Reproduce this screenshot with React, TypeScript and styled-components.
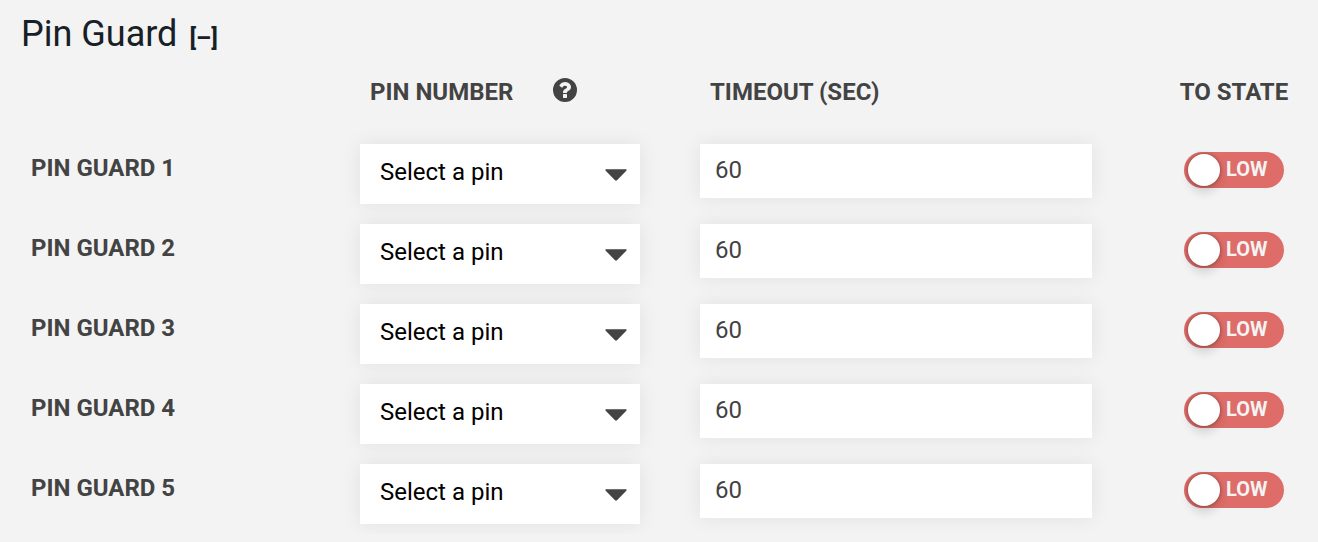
import React, { useState } from "react";
import styled, { createGlobalStyle } from "styled-components";

const GlobalStyle = createGlobalStyle`
  *, *::before, *::after { box-sizing: border-box; }
  body {
    margin: 0;
    background: #f3f3f3;
    color: #434343;
    font-family: Roboto, "Liberation Sans", sans-serif;
    font-size: 24px;
    line-height: 28px;
  }
  button, input, select { font: inherit; }
`;

const Panel = styled.section`
  padding-top: 12px;
`;

const Header = styled.header`
  display: flex;
  align-items: baseline;
  gap: 12px;
  padding-left: 21px;
  color: #162026;
`;

const Title = styled.h2`
  margin: 0;
  font-size: 36px;
  font-weight: 400;
  line-height: 44px;
`;

const CollapseButton = styled.button`
  padding: 0;
  border: 0;
  background: none;
  color: inherit;
  font-weight: 700;
  cursor: pointer;
`;

const GuardTable = styled.table`
  width: 100%;
  table-layout: fixed;
  border-collapse: collapse;
`;

const Column = styled.col<{ $width?: number }>`
  width: ${({ $width }) => ($width ? `${$width}px` : "auto")};
`;

const ColumnHeading = styled.th<{ $align?: "left" | "center" }>`
  height: 78px;
  padding: 22px 0 0 ${({ $align }) => ($align === "center" ? "18px" : "30px")};
  font-weight: 700;
  text-align: ${({ $align = "left" }) => $align};
  text-transform: uppercase;
  vertical-align: top;
`;

const HeadingGroup = styled.div`
  display: flex;
  align-items: flex-start;
  gap: 40px;
`;

const HelpButton = styled.button`
  display: flex;
  padding: 0;
  border: 0;
  background: none;
  color: inherit;
  cursor: pointer;
`;

const RowHeading = styled.th`
  height: 80px;
  padding: 20px 0 0 31px;
  font-weight: 700;
  text-align: left;
  text-transform: uppercase;
  vertical-align: top;
`;

const Cell = styled.td`
  height: 80px;
  padding: 10px 40px 10px 20px;
  vertical-align: top;
`;

const ToggleCell = styled(Cell)`
  padding: 18px 0 0 18px;
  text-align: center;
`;

const SelectBox = styled.div`
  position: relative;
  display: flex;
`;

const Select = styled.select`
  width: 100%;
  height: 60px;
  padding: 0 48px 4px 20px;
  border: 0;
  border-radius: 0;
  appearance: none;
  background: #fff;
  box-shadow: 0 0 20px rgba(0, 0, 0, 0.08);
  color: #000;
`;

const Arrow = styled.svg`
  position: absolute;
  top: 25px;
  right: 13px;
  pointer-events: none;
`;

const TimeoutInput = styled.input`
  display: block;
  width: 100%;
  height: 54px;
  padding: 0 15px 2px;
  border: 0;
  border-radius: 0;
  background: #fff;
  box-shadow: 0 0 20px rgba(0, 0, 0, 0.08);
  color: #434343;
`;

const Toggle = styled.button<{ $on: boolean }>`
  display: inline-flex;
  flex-direction: ${({ $on }) => ($on ? "row-reverse" : "row")};
  align-items: center;
  gap: 6px;
  width: 100px;
  height: 36px;
  padding: 0 4px;
  border: 0;
  border-radius: 18px;
  background: ${({ $on }) => ($on ? "#66aa44" : "#de6c68")};
  color: #f3f3f3;
  font-size: 20px;
  font-weight: 700;
  line-height: 36px;
  vertical-align: top;
  cursor: pointer;
`;

const Knob = styled.span`
  width: 32px;
  height: 32px;
  border-radius: 50%;
  background: #fff;
  box-shadow: 0 0 4px rgba(0, 0, 0, 0.4), 0 8px 8px rgba(0, 0, 0, 0.1);
`;

const ToggleText = styled.span`
  padding-bottom: 2px;
`;

function HelpIcon() {
  return (
    <svg width="24" height="24" viewBox="0 0 1536 1536" fill="currentColor" aria-hidden="true">
      <path
        fillRule="evenodd"
        d="M896 1248v-192q0-14-9-23t-23-9h-192q-14 0-23 9t-9 23v192q0 14 9 23t23 9h192q14 0 23-9t9-23zM1152 576q0-88-55.5-163t-138.5-116-170-41q-243 0-371 213-15 24 8 42l132 100q7 6 19 6 16 0 25-12 53-68 86-92 34-24 86-24 48 0 85.5 26t37.5 59q0 38-20 61t-68 45q-63 28-115.5 86.5t-52.5 125.5v36q0 14 9 23t23 9h192q14 0 23-9t9-23q0-19 21.5-49.5t54.5-49.5q32-18 49-28.5t46-35 44.5-48 28-60.5 12.5-81zM1536 768a768 768 0 1 1-1536 0a768 768 0 1 1 1536 0z"
      />
    </svg>
  );
}

function GuardRow({ index }: { index: number }) {
  const [high, setHigh] = useState(false);
  const name = `Pin Guard ${index}`;
  return (
    <tr>
      <RowHeading scope="row">{name}</RowHeading>
      <Cell>
        <SelectBox>
          <Select aria-label={`${name} pin number`} defaultValue="">
            <option value="">Select a pin</option>
          </Select>
          <Arrow width="22" height="12" viewBox="0 0 22 12" aria-hidden="true">
            <path
              d="M1 0.3H21Q22.2 0.7 21.3 1.7L12 11.2Q11 12.1 10 11.2L0.7 1.7Q-0.2 0.7 1 0.3Z"
              fill="#434343"
            />
          </Arrow>
        </SelectBox>
      </Cell>
      <Cell>
        <TimeoutInput aria-label={`${name} timeout in seconds`} inputMode="numeric" defaultValue="60" />
      </Cell>
      <ToggleCell>
        <Toggle
          type="button"
          role="switch"
          aria-checked={high}
          aria-label={`${name} to state`}
          $on={high}
          onClick={() => setHigh(!high)}
        >
          <Knob />
          <ToggleText>{high ? "HIGH" : "LOW"}</ToggleText>
        </Toggle>
      </ToggleCell>
    </tr>
  );
}

export default function App() {
  const [open, setOpen] = useState(true);
  return (
    <>
      <GlobalStyle />
      <Panel>
        <Header>
          <Title>Pin Guard</Title>
          <CollapseButton type="button" aria-expanded={open} onClick={() => setOpen(!open)}>
            {open ? "[–]" : "[+]"}
          </CollapseButton>
        </Header>
        {open && (
          <GuardTable>
            <colgroup>
              <Column $width={340} />
              <Column $width={340} />
              <Column />
              <Column $width={186} />
            </colgroup>
            <thead>
              <tr>
                <td />
                <ColumnHeading scope="col">
                  <HeadingGroup>
                    Pin Number
                    <HelpButton type="button" aria-label="Help">
                      <HelpIcon />
                    </HelpButton>
                  </HeadingGroup>
                </ColumnHeading>
                <ColumnHeading scope="col">Timeout (sec)</ColumnHeading>
                <ColumnHeading scope="col" $align="center">To State</ColumnHeading>
              </tr>
            </thead>
            <tbody>
              {[1, 2, 3, 4, 5].map((index) => (
                <GuardRow key={index} index={index} />
              ))}
            </tbody>
          </GuardTable>
        )}
      </Panel>
    </>
  );
}
